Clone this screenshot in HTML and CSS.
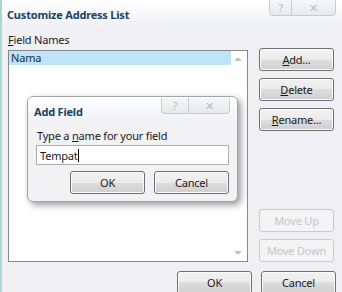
FILE: index.html
```html
<!DOCTYPE html>
<html lang="en">
<head>
    <meta charset="UTF-8">
    <title>Customize Address List</title>
    <link rel="stylesheet" href="styles.css">
</head>
<body>
    <div class="window">
        <div class="titlebar">
            <span class="title">Customize Address List</span>
            <div class="caption">
                <span class="cap cap-help">?</span>
                <span class="cap cap-close">&#x2715;</span>
            </div>
        </div>
        <div class="main">
            <div class="left">
                <div class="label"><u>F</u>ield Names</div>
                <div class="listbox">
                    <div class="item selected">Nama</div>
                    <span class="arrow arrow-up"></span>
                    <span class="arrow arrow-down"></span>
                </div>
            </div>
            <div class="side">
                <button class="btn"><u>A</u>dd...</button>
                <button class="btn"><u>D</u>elete</button>
                <button class="btn"><u>R</u>ename...</button>
                <button class="btn disabled spacer">Move Up</button>
                <button class="btn disabled">Move Down</button>
            </div>
        </div>
        <div class="footer">
            <button class="btn">OK</button>
            <button class="btn">Cancel</button>
        </div>

        <div class="dialog">
            <div class="titlebar dlg-title">
                <span class="title">Add Field</span>
                <div class="caption">
                    <span class="cap cap-help small">?</span>
                    <span class="cap cap-close small">&#x2715;</span>
                </div>
            </div>
            <div class="dlg-body">
                <div class="label">Type a <u>n</u>ame for your field</div>
                <div class="input">Tempat<span class="caret"></span></div>
                <div class="dlg-buttons">
                    <button class="btn">OK</button>
                    <button class="btn">Cancel</button>
                </div>
            </div>
        </div>
    </div>
</body>
</html>
```

FILE: styles.css
```css
body {
    margin: 0;
    font-family: 'Noto Sans', 'Open Sans', sans-serif;
    font-size: 11px;
    letter-spacing: -0.2px;
    color: #1a1a1a;
}
.window {
    position: relative;
    width: 340px;
    height: 292px;
    overflow: hidden;
    background: #f0f0f4;
    border-left: 2px solid #a8d8d4;
}
.titlebar {
    display: flex;
    align-items: flex-start;
    height: 27px;
    padding-left: 5px;
    background: linear-gradient(#ffffff, #f6f7f9 60%, #f0f0f4);
}
.title {
    margin-top: 7px;
    font-weight: bold;
    color: #22405f;
    font-size: 11px;
}
.caption {
    display: flex;
    margin-left: auto;
    margin-right: 6px;
}
.cap {
    display: flex;
    justify-content: center;
    align-items: center;
    height: 15px;
    border: 1px solid #c6ccd2;
    border-top: none;
    background: linear-gradient(#f6f7f8, #e7e9ec);
    color: #b8bcc0;
    font-size: 11px;
}
.cap-help {
    width: 21px;
    border-radius: 0 0 0 4px;
}
.cap-close {
    width: 43px;
    border-left: none;
    border-radius: 0 0 4px 0;
}
.main {
    display: grid;
    grid-template-columns: 240px 75px;
    column-gap: 11px;
    padding: 0 0 0 6px;
}
.label {
    height: 16px;
    line-height: 16px;
    margin: 5px 0 2px;
}
.listbox {
    position: relative;
    height: 210px;
    border: 1px solid #848990;
    background: #ffffff;
}
.item {
    height: 14px;
    line-height: 14px;
    padding-left: 2px;
    margin-right: 16px;
}
.selected {
    background: #bde4f8;
    color: #1a2a40;
}
.arrow {
    position: absolute;
    right: 5px;
    width: 0;
    height: 0;
    border-left: 4px solid transparent;
    border-right: 4px solid transparent;
}
.arrow-up {
    top: 6px;
    border-bottom: 4px solid #c0c4c8;
}
.arrow-down {
    bottom: 6px;
    border-top: 4px solid #c0c4c8;
}
.side {
    display: flex;
    flex-direction: column;
    gap: 7px;
    padding-top: 21px;
}
.spacer {
    margin-top: auto;
}
.btn {
    width: 75px;
    height: 23px;
    padding: 0;
    font-family: inherit;
    font-size: 11px;
    letter-spacing: -0.2px;
    color: #1a1a1a;
    border: 1px solid #707070;
    border-radius: 3px;
    background: linear-gradient(#f2f2f2, #ebebeb 50%, #dddddd 50%, #cfcfcf);
    box-shadow: inset 0 0 0 1px #fbfbfb;
}
.btn.disabled {
    color: #c4c6c8;
    border-color: #c8ccd0;
    background: #f4f4f4;
    box-shadow: none;
}
.footer {
    display: flex;
    justify-content: flex-end;
    gap: 9px;
    padding: 9px 6px 0 0;
}
.dialog {
    position: absolute;
    left: 25px;
    top: 96px;
    width: 209px;
    height: 104px;
    border: 1px solid #a0a4a8;
    border-radius: 6px;
    background: #f2f2f5;
    box-shadow: 3px 3px 7px rgba(0, 0, 0, 0.4);
    overflow: hidden;
}
.dlg-title {
    height: 26px;
    padding-left: 6px;
}
.dlg-title .title {
    margin-top: 7px;
}
.dlg-title .caption {
    margin-right: 7px;
    margin-top: 1px;
}
.cap-help.small {
    width: 26px;
}
.cap-close.small {
    width: 40px;
}
.dlg-body {
    padding: 0 8px 0 8px;
}
.dlg-body .label {
    margin: 5px 0 1px 1px;
}
.input {
    display: flex;
    align-items: center;
    height: 18px;
    padding-left: 3px;
    border: 1px solid #abadb3;
    background: #ffffff;
}
.caret {
    width: 1px;
    height: 13px;
    background: #000000;
}
.dlg-buttons {
    display: flex;
    justify-content: flex-end;
    gap: 9px;
    margin-top: 6px;
}
```
